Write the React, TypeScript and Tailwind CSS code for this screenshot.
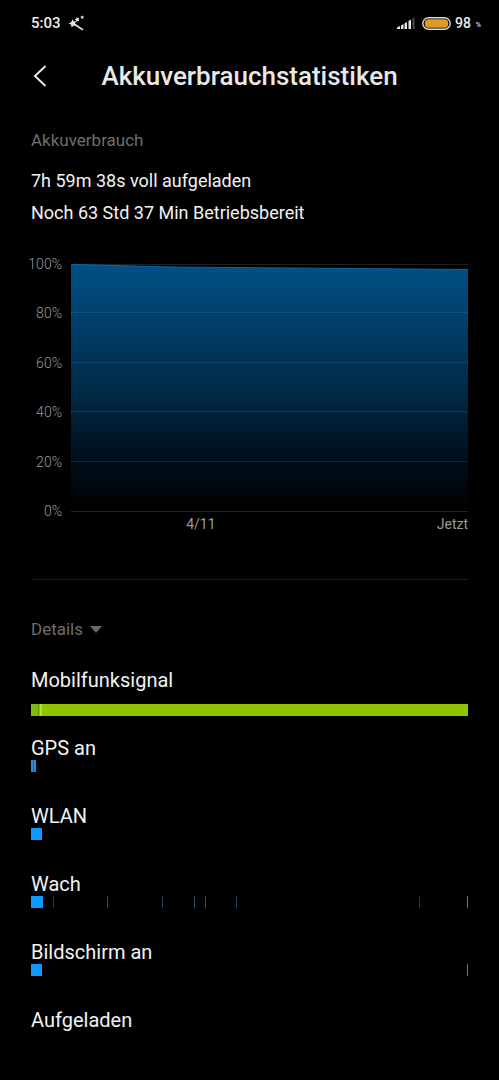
import { useState } from "react";

type Segment = { start: number; width: number; color: string };

type Usage = {
  label: string;
  segments: Segment[];
};

// Segment positions are in units of a timeline that is 437 wide
const TIMELINE_WIDTH = 437;

const usages: Usage[] = [
  {
    label: "Mobilfunksignal",
    segments: [
      { start: 0, width: 437, color: "#8fc400" },
      { start: 0, width: 8, color: "#7bbd0b" },
      { start: 7, width: 1, color: "#4f9d10" },
      { start: 9, width: 2, color: "#c9d916" },
    ],
  },
  {
    label: "GPS an",
    segments: [
      { start: 0, width: 5, color: "#2a8bd8" },
      { start: 2, width: 1, color: "#1c66a6" },
    ],
  },
  {
    label: "WLAN",
    segments: [{ start: 0, width: 11, color: "#0d99ff" }],
  },
  {
    label: "Wach",
    segments: [
      { start: 0, width: 12, color: "#0d99ff" },
      { start: 22, width: 1, color: "#1c3a5e" },
      { start: 76, width: 1, color: "#244a75" },
      { start: 131, width: 1, color: "#223f6c" },
      { start: 163, width: 1, color: "#244a75" },
      { start: 174, width: 1, color: "#244a75" },
      { start: 205, width: 1, color: "#223f6c" },
      { start: 388, width: 1, color: "#26364f" },
      { start: 436, width: 1, color: "#3c86c8" },
    ],
  },
  {
    label: "Bildschirm an",
    segments: [
      { start: 0, width: 11, color: "#0d99ff" },
      { start: 436, width: 1, color: "#3c86c8" },
    ],
  },
  { label: "Aufgeladen", segments: [] },
];

const levels = ["100%", "80%", "60%", "40%", "20%", "0%"];

function WandIcon() {
  return (
    <svg width="17" height="17" viewBox="0 0 17 17" fill="#e8e8e8" aria-hidden="true">
      <path d="M4.600 4.200l1.200 2.300 2.700-.2-1.500 2.300 1.300 2.500-2.700-.5-2 1.900-.4-2.700L.6 8.600l2.500-1.300z" />
      <path d="M8.900 1.800l.9 1.400 1.700-.1-.9 1.500.7 1.700-1.700-.4-1.300 1.200-.2-1.800-1.500-.9 1.600-.7z" />
      <path d="M14.200.2l.6 1.200 1.400.1-1 1 .3 1.400-1.300-.6-1.200.6.2-1.400-1-1 1.400-.1z" />
      <path d="M6.800 9.500l8.200 5.300" stroke="#e8e8e8" strokeWidth="1.600" />
    </svg>
  );
}

function SignalIcon() {
  return (
    <svg width="18" height="12" viewBox="0 0 18 12" fill="#e8e8e8" aria-hidden="true">
      <path d="M0 10.500l3-1.500V12H0z" />
      <path d="M4 8.500L6.500 7v5H4z" />
      <path d="M7.500 6.500L10 5v7H7.500z" />
      <path d="M11.500 4L14 2.500V12h-2.500z" />
      <path d="M15.500 1.500L17.500 0v12h-2z" fill="#4a4a4a" />
    </svg>
  );
}

function StatusBar() {
  return (
    <div className="flex h-[46px] items-center justify-between pl-[31px] pr-[18px] text-[#ececec]">
      <div className="flex items-center gap-[7px]">
        <span className="text-[15px] font-medium">5:03</span>
        <WandIcon />
      </div>
      <div className="flex items-center">
        <SignalIcon />
        <svg className="ml-[7px]" width="29" height="13" viewBox="0 0 29 13" aria-hidden="true">
          <rect x=".8" y=".8" width="27.400" height="11.400" rx="5.700" fill="none" stroke="#e0dcd4" strokeWidth="1.400" />
          <rect x="2.800" y="2.300" width="23.400" height="8.400" rx="3.800" fill="#dc9b26" />
        </svg>
        <span className="ml-1 text-sm font-medium">98</span>
        <span className="ml-[5px] mt-1 text-[7px] font-medium">%</span>
      </div>
    </div>
  );
}

function BatteryChart() {
  return (
    <div className="mt-[26px] flex">
      <div className="flex h-[265px] w-[31px] flex-col justify-between text-sm leading-[18px] text-[#9a9a9a]">
        {levels.map((level) => (
          <span key={level} className="flex justify-end font-light">
            {level}
          </span>
        ))}
      </div>
      <div className="ml-[9px] mt-[9px] flex-1">
        <svg
          className="block h-[248px] w-full"
          viewBox="0 0 397 248"
          preserveAspectRatio="none"
          role="img"
          aria-label="Akkustand"
        >
          <defs>
            <linearGradient id="level" x1="0" y1="0" x2="0" y2="1">
              <stop offset="0" stopColor="#005086" />
              <stop offset="0.500" stopColor="#002b4a" />
              <stop offset="0.800" stopColor="#000e1a" />
              <stop offset="1" stopColor="#000000" />
            </linearGradient>
          </defs>
          <path d="M0 .5H397" stroke="#1f1f1f" />
          <path d="M0 0L100 3L220 4L397 5.500V247H0z" fill="url(#level)" />
          <path d="M0 .5L100 3L220 4L397 5.500" fill="none" stroke="#0d66a6" />
          {[48.5, 98.5, 147.5, 197.5].map((y) => (
            <path key={y} d={`M0 ${y}H397`} stroke="#ffffff" strokeOpacity="0.180" strokeDasharray="1 1" />
          ))}
          <path d="M0 247.500H397" stroke="#242424" />
        </svg>
        <div className="mt-[3px] flex justify-between pl-[29%] text-sm leading-[18px] text-[#9a9a9a]">
          <span>4/11</span>
          <span>Jetzt</span>
        </div>
      </div>
    </div>
  );
}

function Timeline({ segments }: { segments: Segment[] }) {
  return (
    <svg
      className="block h-3 w-full"
      viewBox={`0 0 ${TIMELINE_WIDTH} 12`}
      preserveAspectRatio="none"
      aria-hidden="true"
    >
      {segments.map((s) => (
        <rect key={`${s.start}-${s.width}`} x={s.start} width={s.width} height="12" fill={s.color} />
      ))}
    </svg>
  );
}

export default function App() {
  const [open, setOpen] = useState(true);

  return (
    <div className="min-h-screen bg-black font-['Roboto',sans-serif] text-[#f2f2f2]">
      <StatusBar />
      <header className="flex h-[60px] items-center px-[31px]">
        <button type="button" aria-label="Zurück" className="flex w-6">
          <svg width="17" height="22" viewBox="0 0 17 22" fill="none" stroke="#e4e4e4" strokeWidth="2">
            <path d="M14.500 1L4 11l10.500 10" />
          </svg>
        </button>
        <h1 className="flex-1 pr-6 text-center text-[26px] font-medium leading-8 text-[#e8e8e8]">
          Akkuverbrauchstatistiken
        </h1>
      </header>

      <main className="px-[31px] pb-12">
        <section>
          <h2 className="mt-[22px] text-[17px] leading-6 text-[#6e6e6e]">Akkuverbrauch</h2>
          <p className="mt-[13px] text-lg leading-8">
            7h 59m 38s voll aufgeladen
            <br />
            Noch 63 Std 37 Min Betriebsbereit
          </p>
          <BatteryChart />
        </section>

        <section className="mt-[46px] border-t border-[#1c1c1c] pt-[37px]">
          <button
            type="button"
            aria-expanded={open}
            onClick={() => setOpen(!open)}
            className="flex items-center gap-[7px] text-[17px] leading-6 text-[#6e6e6e]"
          >
            Details
            <svg width="12" height="7" viewBox="0 0 12 7" fill="#6a6a6a" aria-hidden="true">
              <path d="M0 0h12L6 7z" />
            </svg>
          </button>
          {open && (
            <ul className="mt-[27px]">
              {usages.map((usage, i) => (
                <li key={usage.label} className="h-[68px] text-xl leading-6">
                  <div className={i === 0 ? "mb-3" : ""}>{usage.label}</div>
                  <Timeline segments={usage.segments} />
                </li>
              ))}
            </ul>
          )}
        </section>
      </main>
    </div>
  );
}
